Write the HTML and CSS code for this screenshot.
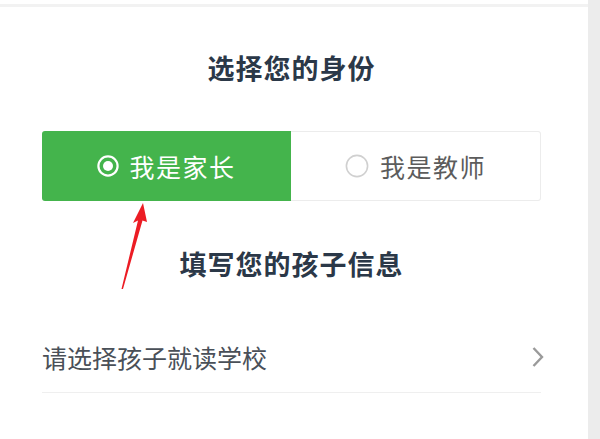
FILE: index.html
```html
<!DOCTYPE html>
<html lang="zh-CN">
<head>
<meta charset="utf-8">
<title>选择您的身份</title>
<link rel="stylesheet" href="styles.css">
</head>
<body>
<div class="page">
  <main class="main">
    <div class="topline"></div>
    <h1 class="title title-first">选择您的身份</h1>
    <div class="toggle">
      <div class="opt opt-on">
        <svg class="radio" width="22" height="22" viewBox="0 0 22 22"><circle cx="11" cy="11" r="9.6" fill="none" stroke="#fff" stroke-width="2.2"/><circle cx="11" cy="11" r="5" fill="#fff"/></svg>
        <span class="opt-label">我是家长</span>
      </div>
      <div class="opt opt-off">
        <svg class="radio" width="24" height="24" viewBox="0 0 24 24"><circle cx="12" cy="12" r="10.6" fill="none" stroke="#d0d0d0" stroke-width="1.6"/></svg>
        <span class="opt-label">我是教师</span>
      </div>
    </div>
    <h2 class="title title-second">填写您的孩子信息</h2>
    <div class="row">
      <span class="row-label">请选择孩子就读学校</span>
      <svg class="chev" width="14" height="22" viewBox="0 0 14 22"><path d="M2.5 2 L11 11 L2.5 20" fill="none" stroke="#9a9a9a" stroke-width="2.4"/></svg>
    </div>
    <svg class="arrow" width="40" height="95" viewBox="0 0 40 95"><polygon points="23,0 27,19 22.5,17.5 3,86 1.5,86 18,17.5 13,20" fill="#ec1c24"/></svg>
  </main>
  <aside class="strip"></aside>
</div>
</body>
</html>
```
FILE: styles.css
```css
* { box-sizing: border-box; }
html, body { margin: 0; padding: 0; background: #fff; }
body { font-family: "Noto Sans CJK SC", "Noto Sans", sans-serif; }
.page { display: flex; width: 600px; height: 439px; overflow: hidden; }
.main { position: relative; width: 588px; padding: 0 47px 0 42px; }
.strip { width: 12px; background: #ececec; }
.topline { height: 3px; margin: 4px -42px 0 -42px; background: #f2f2f2; margin-right: -47px; }
.title { margin: 0; text-align: center; font-weight: 700; font-size: 27px; line-height: 40px; letter-spacing: 1px; color: #2b3848; }
.title-first { margin-top: 41px; }
.title-second { margin-top: 43px; }
.toggle { display: flex; height: 70px; margin-top: 43px; border-radius: 3px; }
.opt { flex: 1; display: flex; align-items: center; justify-content: center; gap: 10px; font-size: 25px; letter-spacing: 1.5px; }
.opt-on { background: #44b44c; color: #fff; border-radius: 3px 0 0 3px; }
.opt-off { border: 1px solid #ececec; border-left: none; border-radius: 0 3px 3px 0; color: #5c5c5c; gap: 11px; }
.opt-label { line-height: 30px; }
.radio { display: block; }
.row { display: flex; align-items: center; justify-content: space-between; height: 71px; margin-top: 38px; border-bottom: 1px solid #efefef; padding-right: 0; }
.row-label { font-size: 25px; line-height: 30px; color: #4a5058; }
.chev { display: block; margin-right: -4px; }
.arrow { position: absolute; left: 120px; top: 203px; }
```
